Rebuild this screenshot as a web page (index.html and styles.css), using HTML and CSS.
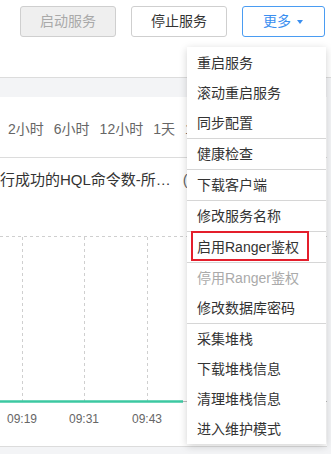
FILE: index.html
```html
<!DOCTYPE html>
<html lang="zh-CN">
<head>
  <meta charset="UTF-8">
  <title>服务管理</title>
  <link rel="stylesheet" href="styles.css">
</head>
<body>
  <div class="toolbar">
    <button class="btn btn-disabled">启动服务</button>
    <button class="btn">停止服务</button>
    <button class="btn btn-primary">更多<span class="caret"></span></button>
  </div>

  <div class="content">
    <div class="panel">
      <div class="ranges">
        <span>2小时</span>
        <span>6小时</span>
        <span>12小时</span>
        <span>1天</span>
        <span>1周</span>
      </div>
      <div class="chart-head">
        <span class="chart-title">行成功的HQL命令数-所…</span>
        <span class="chart-unit">(</span>
      </div>
      <svg class="chart" width="327" height="244" viewBox="0 0 327 244">
        <g stroke="#cfcfcf" stroke-width="1" stroke-dasharray="3 3" fill="none">
          <line x1="0" y1="34.5" x2="327" y2="34.5" />
          <line x1="22.5" y1="35" x2="22.5" y2="199" />
          <line x1="84.5" y1="35" x2="84.5" y2="199" />
          <line x1="147.5" y1="35" x2="147.5" y2="199" />
        </g>
        <line x1="0" y1="199.5" x2="327" y2="199.5" stroke="#bbb" stroke-width="1" />
        <line x1="0" y1="199.5" x2="183" y2="199.5" stroke="#3cc8a2" stroke-width="2.5" />
        <g class="axis-label" text-anchor="middle">
          <text x="22" y="221">09:19</text>
          <text x="84" y="221">09:31</text>
          <text x="147" y="221">09:43</text>
        </g>
      </svg>
    </div>
  </div>

  <ul class="menu">
    <li>重启服务</li>
    <li>滚动重启服务</li>
    <li>同步配置</li>
    <li class="sep"></li>
    <li>健康检查</li>
    <li class="sep"></li>
    <li>下载客户端</li>
    <li class="sep"></li>
    <li>修改服务名称</li>
    <li class="sep"></li>
    <li class="marked">启用Ranger鉴权</li>
    <li class="sep"></li>
    <li class="disabled">停用Ranger鉴权</li>
    <li>修改数据库密码</li>
    <li class="sep"></li>
    <li>采集堆栈</li>
    <li>下载堆栈信息</li>
    <li>清理堆栈信息</li>
    <li>进入维护模式</li>
  </ul>
</body>
</html>
```

FILE: styles.css
```css
body {
  margin: 0;
  font-family: "Liberation Sans", "Noto Sans CJK SC", sans-serif;
  font-size: 14px;
  color: #333;
  background: #fff;
  height: 454px;
  overflow: hidden;
}
.toolbar {
  height: 78px;
  border-bottom: 1px solid #dcdcdc;
  display: flex;
  justify-content: flex-end;
  align-items: flex-start;
  gap: 15px;
  padding: 6px 6px 0 0;
  box-sizing: border-box;
}
.btn {
  height: 31px;
  padding: 0 19px;
  font-family: inherit;
  font-size: 14px;
  line-height: 29px;
  color: #333;
  background: #fff;
  border: 1px solid #cfcfcf;
  border-radius: 3px;
  display: flex;
  align-items: center;
}
.btn-disabled {
  background: #efefef;
  color: #a9a9a9;
}
.btn-primary {
  border-color: #4a9cf2;
  color: #3b8ff0;
  padding: 0 21px 0 20px;
}
.caret {
  width: 0;
  height: 0;
  margin-left: 6px;
  border-left: 3.5px solid transparent;
  border-right: 3.5px solid transparent;
  border-top: 4px solid #3b8ff0;
}
.content {
  background: #f3f4f6;
  padding: 19px 4px 0 0;
  height: 376px;
}
.panel {
  background: #fff;
}
.ranges {
  height: 61px;
  padding: 2px 0 0 8px;
  box-sizing: border-box;
  display: flex;
  align-items: center;
  gap: 10px;
  color: #666;
  border-bottom: 1px solid #dcdcdc;
  white-space: nowrap;
  overflow: hidden;
}
.ranges span:last-child {
  width: 6px;
  overflow: hidden;
  flex-shrink: 0;
}
.chart-head {
  height: 44px;
  line-height: 44px;
  font-size: 15px;
  color: #333;
  white-space: nowrap;
  display: flex;
}
.chart-unit {
  margin-left: 12px;
  width: 4px;
  overflow: hidden;
  color: #666;
}
.chart {
  display: block;
  border-bottom: 1px solid #dcdcdc;
}
.axis-label {
  font-family: "Liberation Sans", sans-serif;
  font-size: 12px;
  fill: #666;
}
.menu {
  position: absolute;
  left: 187px;
  top: 47px;
  width: 139px;
  margin: 0;
  padding: 1px 0 0;
  list-style: none;
  background: #fff;
  box-shadow: 0 2px 8px rgba(0, 0, 0, 0.18);
}
.menu li {
  height: 30px;
  line-height: 30px;
  padding-left: 10px;
  white-space: nowrap;
  position: relative;
}
.menu li.sep {
  height: 1px;
  padding: 0;
  background: #d6d6d6;
}
.menu li.disabled {
  color: #aaa;
}
.menu li.marked::after {
  content: "";
  position: absolute;
  left: 4px;
  top: -1px;
  width: 118px;
  height: 30px;
  box-sizing: border-box;
  border: 2px solid #e41e2b;
}
```
